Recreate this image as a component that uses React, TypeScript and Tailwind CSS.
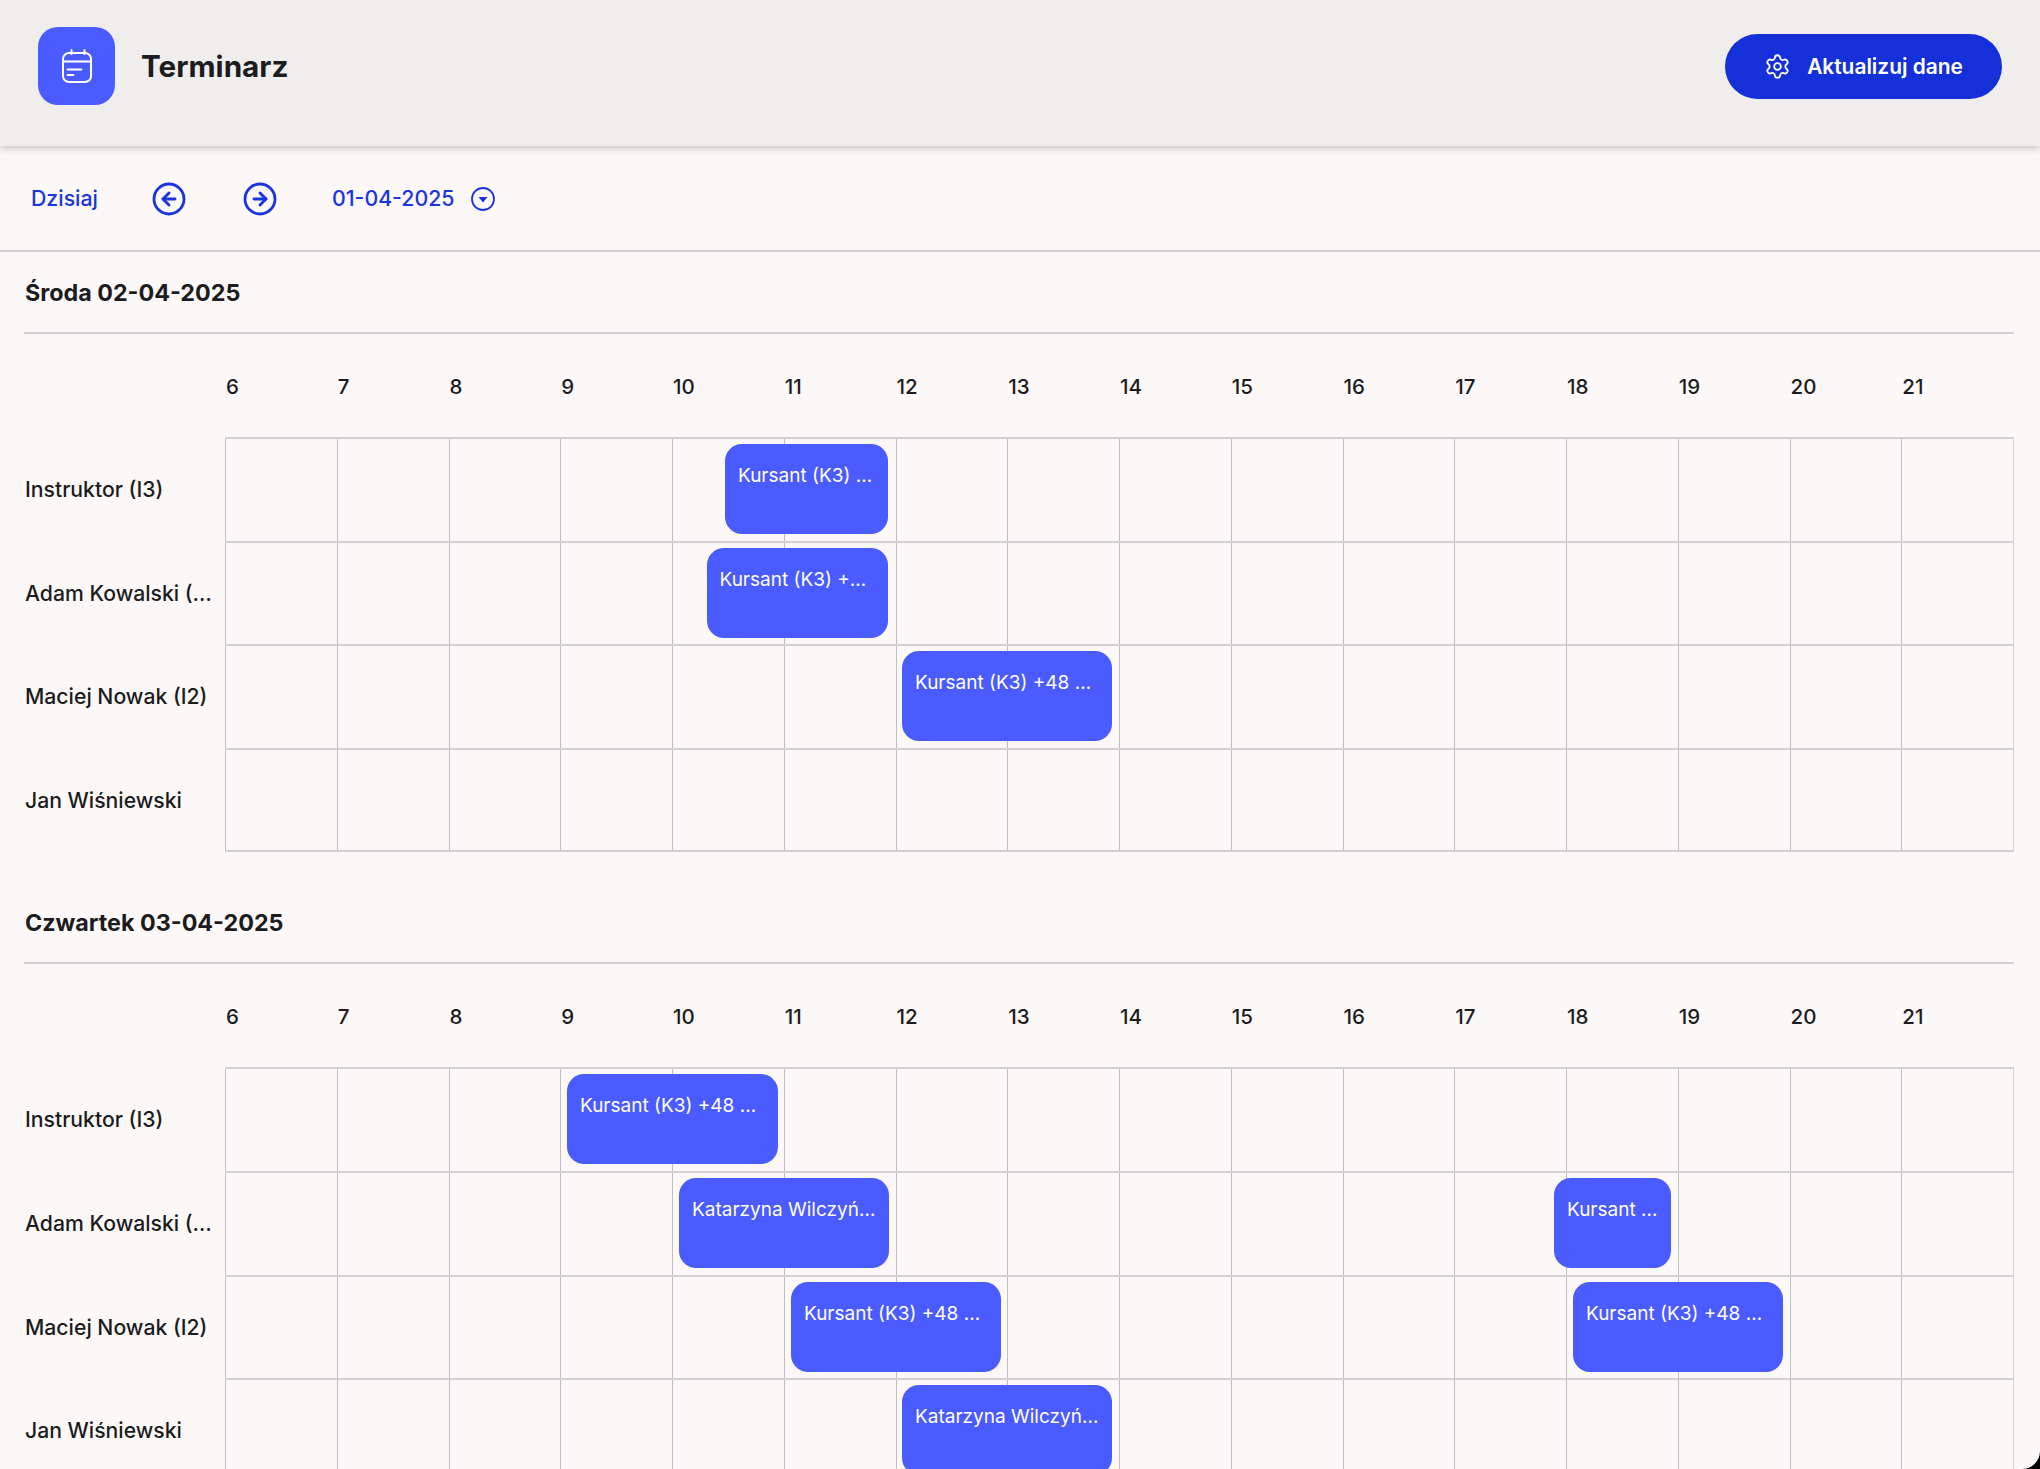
import { CircleArrowLeft, CircleArrowRight, Settings } from 'lucide-react';

interface Booking {
  title: string;
  start: number;
  width: number;
}

interface Instructor {
  name: string;
  bookings: Booking[];
}

interface Day {
  title: string;
  rows: Instructor[];
}

const hours = [6, 7, 8, 9, 10, 11, 12, 13, 14, 15, 16, 17, 18, 19, 20, 21];

const K3 = 'Kursant (K3) +48 600 100 200';
const KW = 'Katarzyna Wilczyńska +48 600';

const days: Day[] = [
  {
    title: 'Środa 02-04-2025',
    rows: [
      { name: 'Instruktor (I3)', bookings: [{ title: K3, start: 500, width: 163 }] },
      { name: 'Adam Kowalski (I1)', bookings: [{ title: K3, start: 481.5, width: 181.5 }] },
      { name: 'Maciej Nowak (I2)', bookings: [{ title: K3, start: 677, width: 210 }] },
      { name: 'Jan Wiśniewski', bookings: [] },
    ],
  },
  {
    title: 'Czwartek 03-04-2025',
    rows: [
      { name: 'Instruktor (I3)', bookings: [{ title: K3, start: 342, width: 211 }] },
      {
        name: 'Adam Kowalski (I1)',
        bookings: [
          { title: KW, start: 454, width: 210 },
          { title: K3, start: 1329, width: 117 },
        ],
      },
      {
        name: 'Maciej Nowak (I2)',
        bookings: [
          { title: K3, start: 566, width: 210 },
          { title: K3, start: 1348, width: 210 },
        ],
      },
      { name: 'Jan Wiśniewski', bookings: [{ title: KW, start: 677, width: 210 }] },
    ],
  },
];

function CalendarIcon() {
  return (
    <svg width="30" height="34" viewBox="0 0 30 34" fill="none" stroke="white" strokeWidth="2" strokeLinecap="round">
      <rect x="1" y="4" width="28" height="29" rx="6" />
      <path d="M1.5 12.5h27" />
      <path d="M9.5 1v4M22.5 1v4" />
      <path d="M5.5 20.5h14M5.5 26h6" />
    </svg>
  );
}

function DropdownIcon() {
  return (
    <svg width="24" height="24" viewBox="0 0 24 24" fill="none">
      <circle cx="12" cy="12" r="11" stroke="#1a35e0" strokeWidth="1.8" />
      <path d="M7.5 10h9L12 15.5z" fill="#1a35e0" />
    </svg>
  );
}

function DaySection({ day }: { day: Day }) {
  return (
    <section className="pl-[24px] pr-[26px] pb-[30.5px]">
      <div className="h-[82px] flex items-center border-b-2 border-[#d2d1d2] pt-[3px]">
        <h2 className="ml-[1px] text-[23.3px] font-bold text-[#1c1c1e]">{day.title}</h2>
      </div>
      <div className="h-[103px] flex items-center">
        <div className="w-[201px] shrink-0" />
        <div className="flex-1 grid grid-cols-16 pl-[1px] pt-[3px]">
          {hours.map((h) => (
            <span key={h} className="text-[20.5px] font-medium text-[#1c1c1e]">
              {h}
            </span>
          ))}
        </div>
      </div>
      <div>
        {day.rows.map((row, i) => (
          <div key={row.name} className="flex h-[103.7px]">
            <div className="w-[201px] shrink-0 flex items-center pl-[1px] pr-[12px] pt-[2px]">
              <span className="truncate text-[21.2px] font-medium text-[#1c1c1e]">{row.name}</span>
            </div>
            <div
              className={`relative flex-1 grid grid-cols-16 border-t-2 border-r border-[#d2d2d6] ${
                i === day.rows.length - 1 ? 'border-b-2' : ''
              }`}
            >
              {hours.map((h) => (
                <div key={h} className="border-l border-[#bebec4]" />
              ))}
              {row.bookings.map((b) => (
                <div
                  key={b.start}
                  className="absolute top-[5px] h-[90px] rounded-[17px] bg-[#4a5bff] px-[13px] pt-[19px] text-[19px] leading-[26px] text-white"
                  style={{ left: b.start, width: b.width }}
                >
                  <div className="truncate">{b.title}</div>
                </div>
              ))}
            </div>
          </div>
        ))}
      </div>
    </section>
  );
}

export default function App() {
  return (
    <div className="h-[1469px] bg-black font-['Inter',sans-serif]">
      <div className="h-full overflow-hidden rounded-br-[18px] bg-[#fbf8f7]">
        <header className="relative z-10 h-[146px] flex items-center justify-between bg-[#f0eded] pl-[38px] pr-[38px] pb-[14px] shadow-[0_2px_8px_rgba(0,0,0,0.22)]">
          <div className="flex items-center gap-[26px]">
            <div className="w-[77px] h-[78px] rounded-[20px] bg-[#4a5bff] flex items-center justify-center">
              <CalendarIcon />
            </div>
            <h1 className="text-[29.7px] font-bold text-[#1c1c1e]">Terminarz</h1>
          </div>
          <button
            type="button"
            className="w-[277px] h-[65px] rounded-full bg-[#1530d8] flex items-center justify-center gap-[16px] text-[20.9px] font-semibold text-white"
          >
            <Settings size={27} strokeWidth={1.6} />
            <span className="pt-[1px]">Aktualizuj dane</span>
          </button>
        </header>

        <div className="h-[106px] flex items-center border-b-2 border-[#d2d1d2] pl-[31px] pt-[2px] text-[21.3px] font-medium text-[#1a35e0]">
          <span>Dzisiaj</span>
          <CircleArrowLeft size={36} strokeWidth={1.9} className="ml-[53px]" />
          <CircleArrowRight size={36} strokeWidth={1.9} className="ml-[55px]" />
          <span className="ml-[54px]">01-04-2025</span>
          <span className="ml-[17px]">
            <DropdownIcon />
          </span>
        </div>

        {days.map((day) => (
          <DaySection key={day.title} day={day} />
        ))}
      </div>
    </div>
  );
}
